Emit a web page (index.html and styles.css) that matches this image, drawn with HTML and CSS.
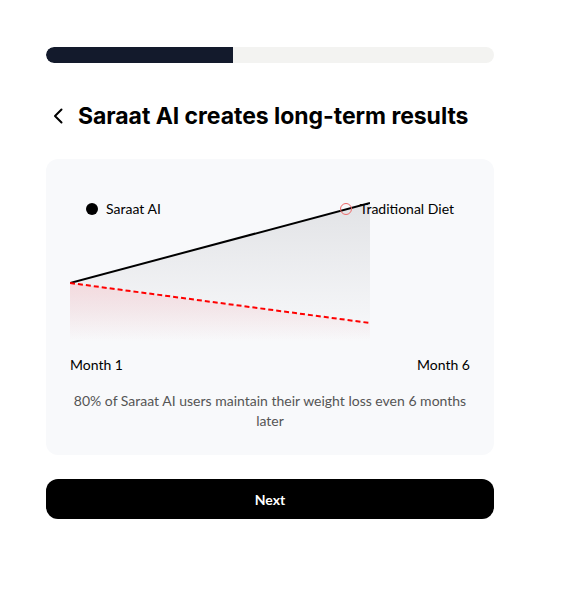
FILE: index.html
```html
<!DOCTYPE html>
<html>
<head>
<meta charset="utf-8">
<link rel="stylesheet" href="styles.css">
</head>
<body>
<div class="page">
  <div class="progress"><div class="progress-fill"></div></div>
  <div class="title-row">
    <svg class="back" width="20" height="20" viewBox="0 0 20 20"><path d="M12.5 3.5 L6 10 L12.5 16.5" fill="none" stroke="#000" stroke-width="2" stroke-linecap="round" stroke-linejoin="round"/></svg>
    <h1 class="title">Saraat AI creates long-term results</h1>
  </div>
  <div class="card">
    <div class="chart">
      <svg class="chart-svg" width="300" height="160" viewBox="0 0 300 160">
        <defs>
          <linearGradient id="gGray" x1="0" y1="0" x2="0" y2="1">
            <stop offset="0" stop-color="#e2e3e6"/>
            <stop offset="1" stop-color="#e2e3e6" stop-opacity="0"/>
          </linearGradient>
          <linearGradient id="gRed" x1="0" y1="0" x2="0" y2="1">
            <stop offset="0" stop-color="#f4d8dc"/>
            <stop offset="1" stop-color="#f4d8dc" stop-opacity="0"/>
          </linearGradient>
        </defs>
        <path d="M0 100 L300 20 L300 158 L0 158 Z" fill="url(#gGray)"/>
        <path d="M0 100 L300 140 L300 158 L0 158 Z" fill="url(#gRed)" opacity="0.9"/>
        <path d="M0 100 L300 20" stroke="#000" stroke-width="2" fill="none"/>
        <path d="M0 100 L300 140" stroke="#ff0000" stroke-width="2" stroke-dasharray="5 3" fill="none"/>
      </svg>
      <div class="legend">
        <div class="legend-item"><span class="dot dot-solid"></span>Saraat AI</div>
        <div class="legend-item"><span class="dot dot-ring"></span>Traditional Diet</div>
      </div>
    </div>
    <div class="months"><span>Month 1</span><span>Month 6</span></div>
    <p class="caption">80% of Saraat AI users maintain their weight loss even 6 months later</p>
  </div>
  <button class="next">Next</button>
</div>
</body>
</html>
```
FILE: styles.css
```css
* { box-sizing: border-box; }
body {
  margin: 0;
  background: #fff;
  font-family: Lato, "Noto Sans", sans-serif;
  color: #000;
}
.page {
  width: 448px;
  margin-left: 46px;
  padding-top: 47px;
}
.progress {
  height: 16px;
  border-radius: 8px;
  background: #f3f3f1;
  overflow: hidden;
}
.progress-fill {
  width: 187px;
  height: 100%;
  background: #131a2c;
  border-radius: 8px 0 0 8px;
}
.title-row {
  display: flex;
  align-items: center;
  gap: 9px;
  margin-top: 38px;
  padding-left: 3px;
}
.back { flex: none; }
.title {
  margin: 0;
  font-family: Inter, "Noto Sans", sans-serif;
  font-size: 23px;
  line-height: 30px;
  font-weight: 700;
  letter-spacing: -0.05px;
}
.card {
  margin-top: 28px;
  background: #f8f9fb;
  border-radius: 12px;
  padding: 24px;
}
.chart {
  position: relative;
  height: 160px;
}
.chart-svg { display: block; }
.legend {
  position: absolute;
  top: 16px;
  left: 16px;
  right: 16px;
  display: flex;
  justify-content: space-between;
  font-size: 14px;
  line-height: 20px;
}
.legend-item {
  display: flex;
  align-items: center;
  gap: 8px;
}
.dot {
  width: 12px;
  height: 12px;
  border-radius: 50%;
  display: inline-block;
}
.dot-solid { background: #000; }
.dot-ring { border: 1.3px solid #ee6a6a; }
.months {
  display: flex;
  justify-content: space-between;
  margin-top: 12px;
  font-size: 14px;
  line-height: 20px;
}
.caption {
  margin: 16px 0 0;
  text-align: center;
  color: #555;
  font-size: 14px;
  line-height: 20px;
}
.next {
  display: block;
  width: 100%;
  margin-top: 24px;
  height: 40px;
  border: none;
  border-radius: 12px;
  background: #000;
  color: #fff;
  font-family: Lato, "Noto Sans", sans-serif;
  font-size: 14px;
  font-weight: 700;
}
```
